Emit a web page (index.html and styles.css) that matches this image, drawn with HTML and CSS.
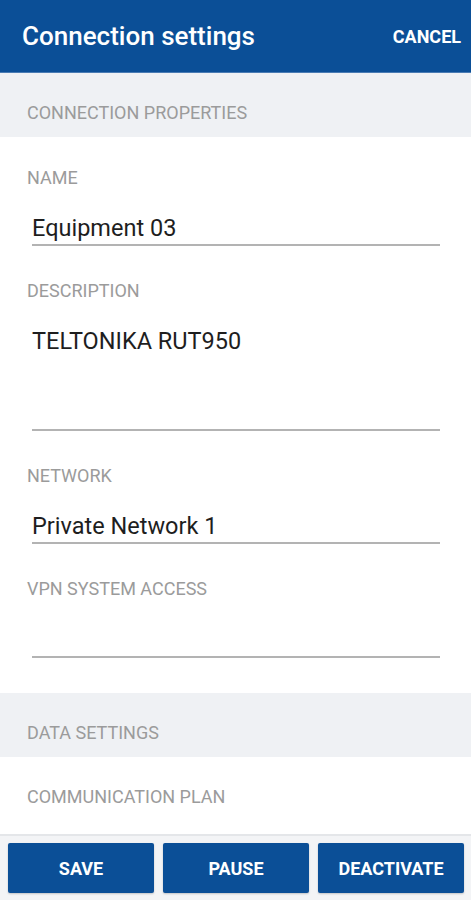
FILE: index.html
```html
<!DOCTYPE html>
<html lang="en">
<head>
<meta charset="utf-8">
<title>Connection settings</title>
<link rel="stylesheet" href="styles.css">
</head>
<body>
<div class="app">
  <header class="topbar">
    <h1 class="title">Connection settings</h1>
    <span class="cancel">CANCEL</span>
  </header>
  <main class="content">
    <div class="section-head">CONNECTION PROPERTIES</div>
    <div class="fields">
      <div class="field">
        <div class="label">NAME</div>
        <div class="input">Equipment 03</div>
      </div>
      <div class="field">
        <div class="label">DESCRIPTION</div>
        <div class="input input-multi">TELTONIKA RUT950</div>
      </div>
      <div class="field">
        <div class="label">NETWORK</div>
        <div class="input">Private Network 1</div>
      </div>
      <div class="field">
        <div class="label">VPN SYSTEM ACCESS</div>
        <div class="input input-empty"></div>
      </div>
    </div>
    <div class="section-head">DATA SETTINGS</div>
    <div class="fields fields-data">
      <div class="field">
        <div class="label">COMMUNICATION PLAN</div>
      </div>
    </div>
  </main>
  <footer class="actions">
    <button class="btn">SAVE</button>
    <button class="btn">PAUSE</button>
    <button class="btn">DEACTIVATE</button>
  </footer>
</div>
</body>
</html>
```

FILE: styles.css
```css
* { box-sizing: border-box; }
html, body { margin: 0; padding: 0; }
body {
  font-family: Roboto, "Noto Sans", "Liberation Sans", sans-serif;
  background: #ffffff;
  width: 471px;
  height: 900px;
  overflow: hidden;
}
.app {
  display: flex;
  flex-direction: column;
  height: 900px;
}
.topbar {
  flex-shrink: 0;
  height: 73px;
  background: #0b4f97;
  border-bottom: 1px solid #4a7bb3;
  display: flex;
  align-items: center;
  justify-content: space-between;
  padding: 0 10px 0 22px;
  color: #ffffff;
}
.title {
  margin: 0;
  font-size: 26px;
  font-weight: 500;
  letter-spacing: 0;
}
.cancel {
  font-size: 18px;
  font-weight: 700;
}
.content {
  flex: 1;
  min-height: 0;
  overflow: hidden;
  display: flex;
  flex-direction: column;
}
.section-head {
  flex-shrink: 0;
  height: 64px;
  background: #eff1f4;
  color: #9b9b9b;
  font-size: 18px;
  line-height: 22px;
  padding: 29px 27px 0;
}
.fields {
  flex-shrink: 0;
  padding: 30px 31px 35px 27px;
  display: flex;
  flex-direction: column;
  gap: 34px;
}
.fields-data {
  padding-top: 29px;
  flex: 1;
}
.label {
  color: #9b9b9b;
  font-size: 18px;
  line-height: 22px;
}
.input {
  margin: 24px 0 0 5px;
  color: #1e1e1e;
  font-size: 23.5px;
  line-height: 30px;
  padding-bottom: 1px;
  border-bottom: 2px solid #b3b3b3;
}
.input-multi {
  height: 105px;
}
.input-empty {
  height: 34px;
}
.actions {
  flex-shrink: 0;
  height: 66px;
  border-top: 2px solid #e4e6e9;
  background: #f3f4f6;
  display: flex;
  gap: 9px;
  padding: 7px 7px 7px 8px;
}
.btn {
  flex: 1;
  border: none;
  border-radius: 2px;
  background: #0b4f97;
  color: #ffffff;
  font-family: Roboto, "Noto Sans", "Liberation Sans", sans-serif;
  font-size: 18px;
  font-weight: 700;
  height: 50px;
  box-shadow: 0 1px 2px rgba(0,0,0,0.2);
}
```
